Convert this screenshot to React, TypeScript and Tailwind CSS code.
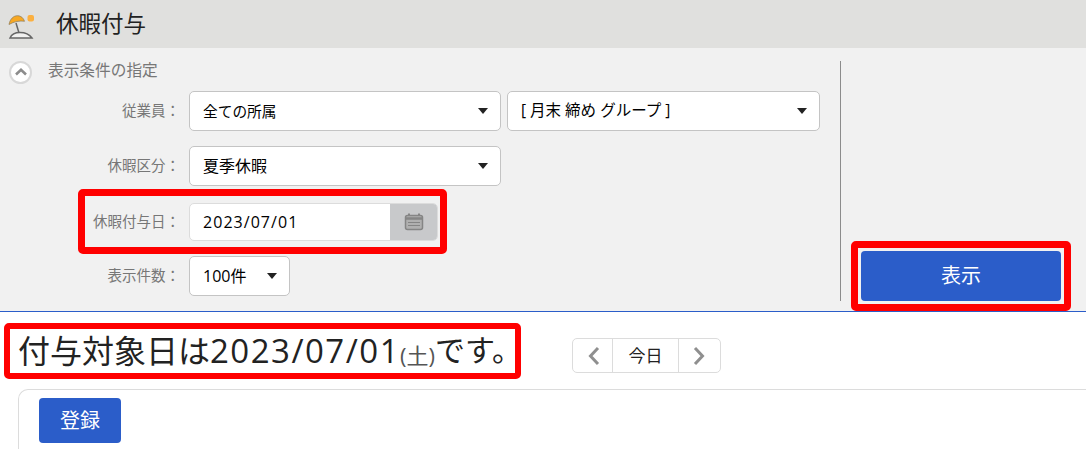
import React from "react";

const font = { fontFamily: '"Open Sans", "Noto Sans CJK JP", sans-serif' };

function Caret() {
  return <span className="ml-auto h-0 w-0 border-x-[5px] border-t-[6px] border-x-transparent border-t-[#222]" />;
}

function Select({ children, className }: { children: React.ReactNode; className: string }) {
  return (
    <div className={`flex h-10 items-center rounded-[5px] border border-[#c4c4c4] bg-white pl-[13px] pr-[12px] text-black ${className}`}>
      <span className="whitespace-pre">{children}</span>
      <Caret />
    </div>
  );
}

function Label({ text, className = "w-[180px]" }: { text: string; className?: string }) {
  return <div className={`shrink-0 text-right text-[14.5px] text-[#777] ${className}`}>{text}</div>;
}

export default function App() {
  return (
    <div className="h-[449px] w-[1086px] overflow-hidden bg-white" style={font}>
      <header className="flex h-12 items-center bg-[#e0e0de] pl-[6px]">
        <svg width="30" height="30" viewBox="0 0 30 30" className="shrink-0" fill="none">
          <rect x="21.500" y="6" width="6.500" height="6.500" rx="2" fill="#fbb040" />
          <path d="M3 15.500C4 10 7.500 6.700 11.500 6.700C15 6.700 17.500 9 18.500 12.300C14 11.500 8 12.500 3 15.500Z" fill="#f7a823" stroke="#8a7a5a" strokeWidth="0.700" />
          <path d="M10 14L13 24" stroke="#666" strokeWidth="1.500" />
          <path d="M4 29C5.500 25.500 9 23.500 14 23.500C20 23.500 23.500 25.500 26 29Z" fill="#f1f1f0" stroke="#666" strokeWidth="1.500" />
        </svg>
        <h1 className="ml-[20px] text-[22.500px] font-normal text-[#222]">休暇付与</h1>
      </header>

      <section className="flex h-[264px] border-b border-[#2b5dc9] bg-[#f1f1f1]">
        <div className="w-[840px] shrink-0 pt-[11px]">
          <div className="flex h-6 items-center pl-[9px]">
            <span className="mt-[2px] flex h-[23px] w-[23px] items-center justify-center rounded-full border-2 border-[#d8d8d8] bg-white">
              <svg width="14" height="10" viewBox="0 0 14 10" fill="none">
                <path d="M2 7.500L7 2.800L12 7.500" stroke="#8c8c8c" strokeWidth="2.600" />
              </svg>
            </span>
            <span className="-mt-[1px] ml-[16px] text-[15.700px] text-[#777]">表示条件の指定</span>
          </div>

          <div className="mt-[8px] flex items-center">
            <Label text="従業員：" />
            <Select className="ml-[9px] w-[312px] text-[14.700px]">全ての所属</Select>
            <Select className="ml-[6px] w-[313px] text-[15.500px]">[ 月末 締め グループ ]</Select>
          </div>

          <div className="mt-[15px] flex items-center">
            <Label text="休暇区分：" />
            <Select className="ml-[9px] w-[312px] text-[16px]">夏季休暇</Select>
          </div>

          <div className="ml-[78px] mt-[3px] flex h-[65px] w-[369px] items-center rounded-[5px] border-[7px] border-[#ff0000]">
            <Label text="休暇付与日：" className="w-[95px]" />
            <div className="ml-[9px] flex h-[38px] w-[249px] overflow-hidden rounded-[5px] border border-[#dcdcdc] bg-white">
              <span className="flex flex-1 items-center pl-[13px] text-[16px] tracking-[0.065em] text-black">2023/07/01</span>
              <span className="flex w-[47px] items-center justify-center bg-[#c8c9cb]">
                <svg width="20" height="18" viewBox="0 0 20 18" fill="none">
                  <path d="M5 0.500V3.500M15 0.500V3.500" stroke="#858585" strokeWidth="2" />
                  <rect x="1.500" y="2.500" width="17" height="14" rx="2" fill="#b0b0b0" stroke="#858585" strokeWidth="1.500" />
                  <path d="M2 5.500H18" stroke="#858585" strokeWidth="2.500" />
                  <path d="M4 9.500H16M4 12.500H16" stroke="#858585" strokeWidth="1" />
                </svg>
              </span>
            </div>
          </div>

          <div className="mt-[2px] flex items-center">
            <Label text="表示件数：" />
            <Select className="ml-[9px] w-[101px] text-[16px]">100件</Select>
          </div>
        </div>

        <div className="flex flex-1 items-end pb-[10px] pt-[13px]">
          <div className="self-stretch border-l border-[#8c8c8c]" />
        </div>
        <div className="mr-[15px] mt-[193px] h-[70px] w-[220px] shrink-0 rounded-[5px] border-[7px] border-[#ff0000] p-[3px]">
          <button className="h-[50px] w-full rounded-[4px] bg-[#2b5dc9] text-[20px] text-white">表示</button>
        </div>
      </section>

      <div className="ml-[4px] mt-[11px] flex items-start">
        <div className="flex h-[56px] w-[517px] items-center whitespace-nowrap rounded-[5px] border-[6px] border-[#ff0000] pb-[2px] pl-[8px] text-[32px] leading-none text-[#222]">
          <span>付与対象日は<span className="text-[33px] tracking-[0.045em]">2023/07/01</span></span>
          <span className="mt-[10px] text-[22px] text-[#555]">(土)</span>
          <span className="text-[30px]">です。</span>
        </div>
        <div className="ml-[51px] mt-[15px] flex h-[35px] w-[149px] rounded-[5px] border border-[#dcdcdc] bg-white">
          <span className="flex w-[40px] items-center justify-center border-r border-[#dcdcdc] pl-[2px]">
            <svg width="14" height="22" viewBox="0 0 14 22" fill="none">
              <path d="M11 3L3.500 11L11 19" stroke="#8f8f8f" strokeWidth="3" />
            </svg>
          </span>
          <span className="flex flex-1 items-center justify-center text-[17px] text-[#222]">今日</span>
          <span className="flex w-[42px] items-center justify-center border-l border-[#dcdcdc] pr-[2px]">
            <svg width="14" height="22" viewBox="0 0 14 22" fill="none">
              <path d="M3 3L10.500 11L3 19" stroke="#8f8f8f" strokeWidth="3" />
            </svg>
          </span>
        </div>
      </div>

      <div className="ml-[18px] mt-[10px] h-[80px] rounded-tl-[10px] border-l border-t border-[#dcdcdc] pl-[20px] pt-[8px]">
        <button className="h-[45px] w-[82px] rounded-[4px] bg-[#2b5dc9] text-[20px] text-white">登録</button>
      </div>
    </div>
  );
}
